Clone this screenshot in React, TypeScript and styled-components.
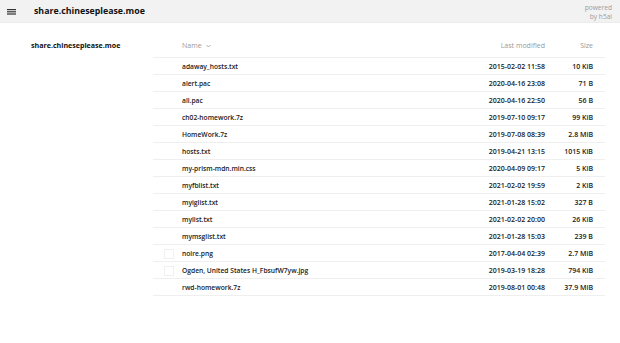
import styled, { createGlobalStyle } from "styled-components";

interface FileEntry {
  name: string;
  modified: string;
  size: string;
  thumb?: boolean;
}

const files: FileEntry[] = [
  { name: "adaway_hosts.txt", modified: "2015-02-02 11:58", size: "10 KiB" },
  { name: "alert.pac", modified: "2020-04-16 23:08", size: "71 B" },
  { name: "all.pac", modified: "2020-04-16 22:50", size: "56 B" },
  { name: "ch02-homework.7z", modified: "2019-07-10 09:17", size: "99 KiB" },
  { name: "HomeWork.7z", modified: "2019-07-08 08:39", size: "2.8 MiB" },
  { name: "hosts.txt", modified: "2019-04-21 13:15", size: "1015 KiB" },
  { name: "my-prism-mdn.min.css", modified: "2020-04-09 09:17", size: "5 KiB" },
  { name: "myfblist.txt", modified: "2021-02-02 19:59", size: "2 KiB" },
  { name: "myiglist.txt", modified: "2021-01-28 15:02", size: "327 B" },
  { name: "mylist.txt", modified: "2021-02-02 20:00", size: "26 KiB" },
  { name: "mymsglist.txt", modified: "2021-01-28 15:03", size: "239 B" },
  { name: "noire.png", modified: "2017-04-04 02:39", size: "2.7 MiB", thumb: true },
  {
    name: "Ogden, United States H_FbsufW7yw.jpg",
    modified: "2019-03-19 18:28",
    size: "794 KiB",
    thumb: true,
  },
  { name: "rwd-homework.7z", modified: "2019-08-01 00:48", size: "37.9 MiB" },
];

const GlobalStyle = createGlobalStyle`
  html, body {
    margin: 0;
    padding: 0;
    background: #fff;
  }

  body {
    font-family: "Open Sans", "DejaVu Sans", sans-serif;
    color: #222;
  }
`;

const App = () => {
  return (
    <>
      <GlobalStyle />
      <Page>
        <Topbar>
          <MenuButton>
            <svg width="9" height="6" viewBox="0 0 9 6">
              <rect x="0" y="0" width="9" height="1.2" fill="#333" />
              <rect x="0" y="2.2" width="9" height="1.2" fill="#333" />
              <rect x="0" y="4.4" width="9" height="1.2" fill="#333" />
            </svg>
          </MenuButton>
          <Crumb>share.chineseplease.moe</Crumb>
          <Powered>
            powered
            <br />
            by h5ai
          </Powered>
        </Topbar>
        <Body>
          <Sidebar>
            <SidebarTitle>share.chineseplease.moe</SidebarTitle>
          </Sidebar>
          <Listing>
            <HeadRow>
              <span />
              <HeadLabel>
                Name
                <svg width="5" height="4" viewBox="0 0 5 4">
                  <path
                    d="M0.5 1 L2.5 3 L4.5 1"
                    fill="none"
                    stroke="#999"
                    strokeWidth="0.8"
                  />
                </svg>
              </HeadLabel>
              <HeadLabel $align="right">Last modified</HeadLabel>
              <HeadLabel $align="right">Size</HeadLabel>
            </HeadRow>
            {files.map((f) => (
              <Row key={f.name}>
                <IconCell>{f.thumb && <Thumb />}</IconCell>
                <Name>{f.name}</Name>
                <Cell>{f.modified}</Cell>
                <Cell>{f.size}</Cell>
              </Row>
            ))}
          </Listing>
        </Body>
      </Page>
    </>
  );
};

export default App;

const Page = styled.div`
  width: 620px;
  min-height: 343px;
  display: flex;
  flex-direction: column;
`;

const Topbar = styled.div`
  height: 23px;
  background: #f2f2f2;
  border-bottom: 1px solid #ebebeb;
  box-sizing: border-box;
  display: flex;
  align-items: center;
  padding: 0 8px 0 7px;
`;

const MenuButton = styled.div`
  width: 9px;
  height: 6px;
  display: flex;
  margin-right: 18px;
  margin-top: 1px;
`;

const Crumb = styled.div`
  font-size: 8.8px;
  font-weight: 700;
  color: #111;
  flex: 1;
  line-height: 12px;
`;

const Powered = styled.div`
  font-size: 6.6px;
  line-height: 9px;
  color: #9c9c9c;
  text-align: right;
  margin-top: 1px;
`;

const Body = styled.div`
  display: flex;
  padding-top: 16px;
`;

const Sidebar = styled.div`
  width: 153px;
  flex-shrink: 0;
  padding-left: 31px;
  box-sizing: border-box;
`;

const SidebarTitle = styled.div`
  font-size: 7.1px;
  font-weight: 700;
  line-height: 12px;
  color: #111;
`;

const Listing = styled.div`
  width: 452px;
  display: flex;
  flex-direction: column;
`;

const grid = `
  display: grid;
  grid-template-columns: 29px 1fr 100px 48px;
  padding-right: 12px;
  border-bottom: 1px solid #efefef;
`;

const HeadRow = styled.div`
  ${grid}
  height: 19px;
  box-sizing: border-box;
  line-height: 12px;
  align-items: start;
  padding-top: 1px;
`;

const HeadLabel = styled.div<{ $align?: "left" | "right" }>`
  font-size: 7px;
  color: #999;
  text-align: ${({ $align }) => $align ?? "left"};
  display: flex;
  align-items: center;
  justify-content: ${({ $align }) =>
    $align === "right" ? "flex-end" : "flex-start"};
  gap: 4px;
`;

const Row = styled.div`
  ${grid}
  height: 17px;
  box-sizing: border-box;
  align-items: center;
  padding-top: 1px;
`;

const IconCell = styled.div`
  display: flex;
  align-items: center;
  padding-left: 11px;
`;

const Thumb = styled.div`
  width: 10px;
  height: 10px;
  border: 1px solid #f0f0f0;
  box-sizing: border-box;
`;

const Name = styled.div`
  font-size: 6.7px;
  font-weight: 600;
  color: #1a1a1a;
  white-space: nowrap;
`;

const Cell = styled.div`
  font-size: 7px;
  font-weight: 600;
  color: #1a1a1a;
  text-align: right;
  white-space: nowrap;
`;
